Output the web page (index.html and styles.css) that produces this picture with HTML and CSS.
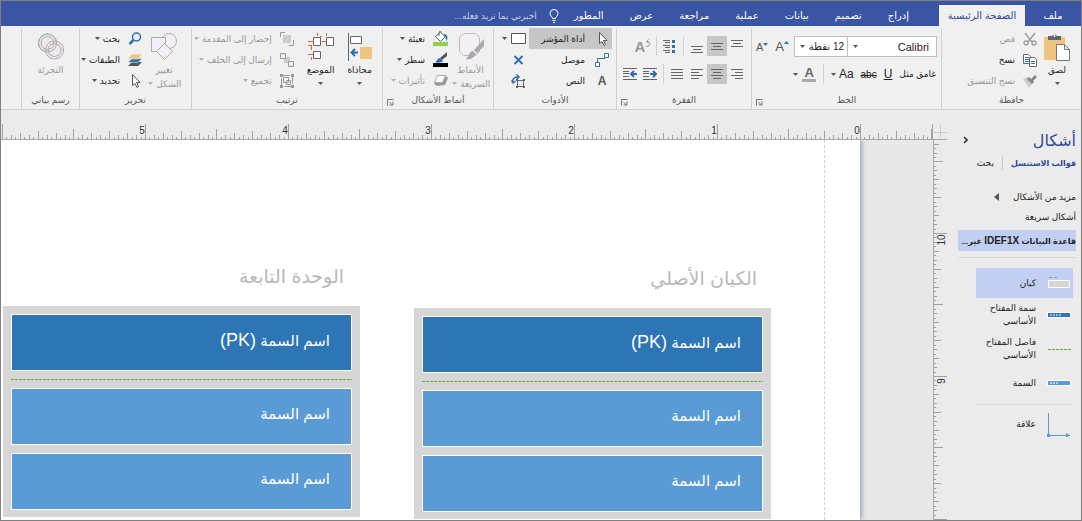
FILE: index.html
```html
<!DOCTYPE html>
<html lang="ar" dir="rtl">
<head>
<meta charset="utf-8">
<title>الصفحة الرئيسية</title>
<link rel="stylesheet" href="styles.css">
</head>
<body>
<svg class="defs" aria-hidden="true">
  <defs>
    <symbol id="arrow" viewBox="0 0 5 3"><path d="M0 0h5L2.500 3z" fill="currentColor"/></symbol>
    <symbol id="launcher" viewBox="0 0 7 7"><path d="M.5 6.500V.5h6M2.500 3l3 3M6 2.500V6H2.500" fill="none" stroke="currentColor"/></symbol>
    <pattern id="ticks-h" x="0" y="0" width="143" height="30" patternUnits="userSpaceOnUse">
      <path stroke="#a0a0a0" d="M.5 14v15M4.500 27v2M9.500 25v4M13.500 27v2M18.500 23v6M22.500 27v2M27.500 25v4M31.500 27v2M36.500 21v8M40.500 27v2M45.500 25v4M49.500 27v2M54.500 23v6M58.500 27v2M63.500 25v4M67.500 27v2M71.500 19v10M76.500 27v2M80.500 25v4M85.500 27v2M89.500 23v6M94.500 27v2M98.500 25v4M103.500 27v2M107.500 21v8M112.500 27v2M116.500 25v4M121.500 27v2M125.500 23v6M130.500 27v2M134.500 25v4M139.500 27v2"/>
    </pattern>
    <pattern id="ticks-v" x="0" y="93" width="15" height="143" patternUnits="userSpaceOnUse">
      <path stroke="#a0a0a0" d="M1 .5h14M1 4.500h2M1 9.500h3M1 13.500h2M1 18.500h5M1 22.500h2M1 27.500h3M1 31.500h2M1 36.500h7M1 40.500h2M1 45.500h3M1 49.500h2M1 54.500h5M1 58.500h2M1 63.500h3M1 67.500h2M1 71.500h9M1 76.500h2M1 80.500h3M1 85.500h2M1 89.500h5M1 94.500h2M1 98.500h3M1 103.500h2M1 107.500h7M1 112.500h2M1 116.500h3M1 121.500h2M1 125.500h5M1 130.500h2M1 134.500h3M1 139.500h2"/>
    </pattern>
  </defs>
</svg>

<div class="window">
  <nav class="tabs">
    <button class="tab tab-file">ملف</button>
    <button class="tab tab-active">الصفحة الرئيسية</button>
    <button class="tab">إدراج</button>
    <button class="tab">تصميم</button>
    <button class="tab">بيانات</button>
    <button class="tab">عملية</button>
    <button class="tab">مراجعة</button>
    <button class="tab">عرض</button>
    <button class="tab">المطور</button>
    <label class="tell">
      <svg width="10" height="14" viewBox="0 0 10 14" fill="none" stroke="#fff"><path d="M3.500 9.500C3.500 7.500 1 7 1 4.500a4 4 0 0 1 8 0C9 7 6.500 7.500 6.500 9.500zM3.500 11.500h3M4 13.500h2"/></svg>
      <input type="text" placeholder="أخبرني بما تريد فعله..." aria-label="أخبرني بما تريد فعله">
    </label>
  </nav>

  <header class="ribbon">
    <section class="group clipboard">
      <div class="body">
        <button class="big">
          <svg width="26" height="28" viewBox="0 0 26 28"><path fill="#edc57c" d="M0 4h21v23H0z"/><path fill="#666" d="M4 7V3h4a3 3 0 0 1 5 0h4v4z"/><circle cx="10.500" cy="3" r="1" fill="#fff"/><path fill="#fff" stroke="#777" d="M12.500 11.500h8l5 5v11h-13zM20.500 11.500v5h5"/></svg>
          <span>لصق</span>
          <svg class="arrow"><use href="#arrow"/></svg>
        </button>
        <div class="stack">
          <button class="item off"><svg width="14" height="14" viewBox="0 0 14 14" fill="none" stroke="#999" stroke-width="1.300"><path d="M2 1l7 9M12 1L5 10"/><circle cx="3" cy="11" r="2"/><circle cx="11" cy="11" r="2"/></svg><span>قص</span></button>
          <button class="item"><svg width="14" height="14" viewBox="0 0 14 14" fill="#fff" stroke="#667"><path d="M.5 1.500h5l2 2v7h-7z"/><path d="M6.500 4.500h5l2 2v7h-7z"/><path stroke="#2e6fb5" d="M2 4.500h4M2 6.500h4M2 8.500h4M8 8.500h4M8 10.500h4"/></svg><span>نسخ</span></button>
          <button class="item off"><svg width="14" height="14" viewBox="0 0 14 14"><path fill="#ccc" d="M0 5l5-2 5 6-4 5z"/><path stroke="#888" stroke-width="3" d="M5 4l5 5M9 6l4-4"/></svg><span>نسخ التنسيق</span></button>
        </div>
      </div>
      <h2>حافظة</h2>
    </section>

    <section class="group font">
      <div class="body rows">
        <div class="line">
          <span class="combo combo-font"><select aria-label="الخط"><option>Calibri</option></select><svg class="arrow"><use href="#arrow"/></svg></span>
          <span class="combo combo-size"><select aria-label="حجم الخط"><option>12 نقطة</option></select><svg class="arrow"><use href="#arrow"/></svg></span>
          <button class="glyph grow" aria-label="تكبير الخط"><span>A</span><svg width="5" height="3" viewBox="0 0 5 3"><path fill="#2e6fb5" d="M0 3h5L2.500 0z"/></svg></button>
          <button class="glyph grow shrink" aria-label="تصغير الخط"><span>A</span><svg width="5" height="3" viewBox="0 0 5 3"><path fill="#2e6fb5" d="M0 0h5L2.500 3z"/></svg></button>
        </div>
        <div class="line style-line">
          <button class="glyph">غامق مثل</button>
          <button class="glyph under">U</button>
          <button class="glyph strike">abc</button>
          <button class="glyph case">Aa<svg class="arrow"><use href="#arrow"/></svg></button>
          <i class="sep"></i>
          <button class="glyph color"><span>A</span><svg class="arrow"><use href="#arrow"/></svg></button>
        </div>
      </div>
      <h2>الخط</h2>
      <button class="launch" aria-label="إعدادات الخط"><svg width="7" height="7"><use href="#launcher"/></svg></button>
    </section>

    <section class="group para">
      <div class="body rows">
        <div class="line">
          <button class="cell" aria-label="محاذاة لأعلى"><svg width="14" height="14" viewBox="0 0 14 14" stroke="#666"><path d="M1 1.500h12M3 4.500h8M1 7.500h12"/></svg></button>
          <button class="cell on" aria-label="محاذاة للوسط"><svg width="14" height="14" viewBox="0 0 14 14" stroke="#666"><path d="M1 4.500h12M3 7.500h8M1 10.500h12"/></svg></button>
          <button class="cell" aria-label="محاذاة لأسفل"><svg width="14" height="14" viewBox="0 0 14 14" stroke="#666"><path d="M1 7.500h12M3 10.500h8M1 13.500h12"/></svg></button>
          <i class="sep"></i>
          <button class="cell" aria-label="تعداد نقطي"><svg width="14" height="14" viewBox="0 0 14 14" stroke="#666"><path d="M0 1.500h7M2 3.500h5M0 6.500h7M2 8.500h5M0 11.500h7M2 13.500h5"/><path stroke="#2e6fb5" stroke-width="3" d="M9 2.500h3M9 7.500h3M9 12.500h3"/></svg></button>
          <i class="sep"></i>
          <button class="cell turn" aria-label="تدوير النص"><span>A</span><svg width="6" height="8" viewBox="0 0 6 8" fill="none" stroke="#999"><path d="M1 7.500c5 0 5-5 1-5M3.500.5l-2 2 2 2"/></svg></button>
        </div>
        <div class="line">
          <button class="cell" aria-label="محاذاة لليمين"><svg width="14" height="14" viewBox="0 0 14 14" stroke="#666"><path d="M1 2.500h12M5 5.500h8M1 8.500h12M5 11.500h8"/></svg></button>
          <button class="cell on" aria-label="توسيط"><svg width="14" height="14" viewBox="0 0 14 14" stroke="#666"><path d="M1 2.500h12M3 5.500h8M1 8.500h12M3 11.500h8"/></svg></button>
          <button class="cell" aria-label="محاذاة لليسار"><svg width="14" height="14" viewBox="0 0 14 14" stroke="#666"><path d="M1 2.500h12M1 5.500h8M1 8.500h12M1 11.500h8"/></svg></button>
          <button class="cell" aria-label="ضبط"><svg width="14" height="14" viewBox="0 0 14 14" stroke="#666"><path d="M1 2.500h12M1 5.500h12M1 8.500h12M1 11.500h12"/></svg></button>
          <i class="sep"></i>
          <button class="cell" aria-label="إنقاص المسافة"><svg width="14" height="14" viewBox="0 0 14 14" stroke="#666"><path d="M0 1.500h14M0 4.500h6M0 6.500h6M0 9.500h6M0 12.500h14"/><path stroke="#2e6fb5" stroke-width="2" fill="none" d="M7 7h5M10 4l3 3-3 3"/></svg></button>
          <button class="cell" aria-label="زيادة المسافة"><svg width="14" height="14" viewBox="0 0 14 14" stroke="#666"><path d="M0 1.500h14M0 4.500h6M0 6.500h6M0 9.500h6M0 12.500h14"/><path stroke="#2e6fb5" stroke-width="2" fill="none" d="M9 7h5M11 4L8 7l3 3"/></svg></button>
        </div>
      </div>
      <h2>الفقرة</h2>
      <button class="launch" aria-label="إعدادات الفقرة"><svg width="7" height="7"><use href="#launcher"/></svg></button>
    </section>

    <section class="group tools">
      <div class="body">
        <div class="stack wide">
          <button class="item on"><svg width="14" height="14" viewBox="0 0 14 14"><path fill="#fff" stroke="#555" d="M4.500.5v11l2.500-2 2 4 1.500-1-2-4H12z"/></svg><span>أداة المؤشر</span></button>
          <button class="item"><svg width="14" height="14" viewBox="0 0 14 14" fill="none"><path stroke="#666" d="M2.500 9V5.500H10"/><path fill="#fff" stroke="#2e6fb5" d="M.5 9.500h4v4h-4zM9.500.5h4v4h-4z"/></svg><span>موصل</span></button>
          <button class="item"><span class="letter">A</span><span>النص</span></button>
        </div>
        <div class="stack">
          <button class="item" aria-label="مستطيل"><svg width="15" height="11" viewBox="0 0 15 11"><path fill="#fff" stroke="#555" d="M.5.5h14v10H.5z"/></svg><svg class="arrow"><use href="#arrow"/></svg></button>
          <button class="item" aria-label="نقطة اتصال"><svg width="15" height="10" viewBox="0 0 15 10"><path stroke="#2e6fb5" stroke-width="2" d="M3.500 1l8 8M11.500 1l-8 8"/></svg></button>
          <button class="item" aria-label="كتلة النص"><svg width="15" height="14" viewBox="0 0 15 14" fill="none"><path stroke="#2e6fb5" stroke-width="1.500" d="M2 9C1 5 3 3 7 3M5.500.5L8 3 5.500 5.500M.5 6.500L2 9l2.500-2"/><path stroke="#666" d="M6.500 6.500h6v6h-6z"/><path fill="#666" d="M5 5h2v2H5zM12 5h2v2h-2zM5 12h2v2H5zM12 12h2v2h-2z"/></svg></button>
        </div>
      </div>
      <h2>الأدوات</h2>
    </section>

    <section class="group styles">
      <div class="body">
        <button class="big off">
          <svg width="28" height="28" viewBox="0 0 28 28"><path fill="#f4eff6" stroke="#bbb" d="M6.500.5h12l4 4v14l-4 4h-12l-4-4v-14z"/><path fill="#aaa" d="M27 6v7l-7 7-3-3zM16 18l3 3c-2 4-5 6-11 5 4-1 3-7 8-8z"/></svg>
          <span>الأنماط<br>السريعة <svg class="arrow"><use href="#arrow"/></svg></span>
        </button>
        <div class="stack">
          <button class="item"><svg width="15" height="15" viewBox="0 0 15 15"><path fill="#8fd14f" d="M0 11h15v4H0z"/><path fill="#fff" stroke="#666" d="M7.500 1.500l5 4-5 5-5-5zM6 5V1a1.500 1.500 0 0 1 2.500 0"/><path fill="#2e6fb5" d="M11 3c3 0 4 3 3 7-1-2-1-4-3-5z"/></svg><span>تعبئة</span><svg class="arrow"><use href="#arrow"/></svg></button>
          <button class="item"><svg width="15" height="15" viewBox="0 0 15 15"><path d="M0 11h15v4H0z"/><path fill="#555" d="M14 0v4L9 8 7 6z"/><path fill="#2e6fb5" d="M7 6l3 3c-2 2-5 2-8 1 3-1 2-4 5-4z"/></svg><span>سطر</span><svg class="arrow"><use href="#arrow"/></svg></button>
          <button class="item off"><svg width="15" height="13" viewBox="0 0 15 13"><path fill="#999" d="M5 4l8-2 2 2-3 7-8 1-3-2z"/><path fill="#fff" stroke="#aaa" d="M4.500 1.500h8l-3 7h-8z"/></svg><span>تأثيرات</span><svg class="arrow"><use href="#arrow"/></svg></button>
        </div>
      </div>
      <h2>أنماط الأشكال</h2>
      <button class="launch off" aria-label="إعدادات الأنماط"><svg width="7" height="7"><use href="#launcher"/></svg></button>
    </section>

    <section class="group arrange">
      <div class="body">
        <button class="big">
          <svg width="24" height="28" viewBox="0 0 24 28"><path stroke="#666" d="M.5 0v28"/><path fill="#fff" stroke="#666" d="M2.500 3.500h11v7h-11z"/><path fill="#edc57c" d="M12 14h12v12H12z"/><path fill="none" stroke="#2e6fb5" stroke-width="2" d="M4 19.500h6M7 16l-3.500 3.500L7 23"/></svg>
          <span>محاذاة</span>
          <svg class="arrow"><use href="#arrow"/></svg>
        </button>
        <button class="big">
          <svg width="26" height="28" viewBox="0 0 26 28"><path fill="none" stroke="#e0603f" d="M9.500 0v3M18.500 0v3M12 3.500h2M14 8.500h4M0 8.500h5M3.500 12v5M0 12.500h3M0 21.500h5M3.500 24v3"/><path fill="#fff" stroke="#666" d="M5.500 4.500h7v8h-7zM18.500 4.500h7v8h-7zM5.500 18.500h7v7h-7z"/></svg>
          <span>الموضع</span>
          <svg class="arrow"><use href="#arrow"/></svg>
        </button>
        <div class="stack">
          <button class="item off"><svg width="14" height="14" viewBox="0 0 14 14" fill="none" stroke="#999"><path fill="#ccc" stroke="none" d="M3 3h8v8H3z"/><path d="M.5 5V.5H5M9 13.500h4.500V8"/></svg><span>إحضار إلى المقدمة</span><svg class="arrow"><use href="#arrow"/></svg></button>
          <button class="item off"><svg width="14" height="14" viewBox="0 0 14 14" fill="none" stroke="#999"><path fill="#ccc" stroke="none" d="M4 4h6v6H4z"/><path fill="#f0f0f0" d="M.5.5h5v5h-5zM8.500 8.500h5v5h-5z"/></svg><span>إرسال إلى الخلف</span><svg class="arrow"><use href="#arrow"/></svg></button>
          <button class="item off"><svg width="14" height="14" viewBox="0 0 14 14" fill="none" stroke="#999"><path d="M1.500 1.500h11v11h-11z" stroke-dasharray="8 3"/><path d="M3.500 3.500h5v5h-5zM6.500 6.500h4v4h-4z"/><path fill="#999" stroke="none" d="M0 0h3v3H0zM11 0h3v3h-3zM0 11h3v3H0zM11 11h3v3h-3z"/></svg><span>تجميع</span><svg class="arrow"><use href="#arrow"/></svg></button>
        </div>
      </div>
      <h2>ترتيب</h2>
    </section>

    <section class="group editing">
      <div class="body">
        <button class="big off">
          <svg width="26" height="28" viewBox="0 0 26 28" fill="#f4eff6" stroke="#aaa"><circle cx="18" cy="8" r="7.500"/><path d="M.5 4.500h14v14H.5z"/><path d="M13.500 10.500l8 8-8 8-8-8z"/></svg>
          <span>تغيير<br>الشكل <svg class="arrow"><use href="#arrow"/></svg></span>
        </button>
        <div class="stack">
          <button class="item"><svg width="14" height="14" viewBox="0 0 14 14" fill="none" stroke="#2e6fb5"><circle cx="8.500" cy="5" r="4" stroke-width="1.500"/><path stroke-width="2.500" d="M5.500 8L1.500 12"/></svg><span>بحث</span><svg class="arrow"><use href="#arrow"/></svg></button>
          <button class="item"><svg width="14" height="14" viewBox="0 0 14 14"><path fill="#555" d="M4 9h10l-4 4H0z"/><path fill="#2e6fb5" stroke="#f0f0f0" stroke-width=".5" d="M4 5.500h10l-4 4H0z"/><path fill="#edc57c" stroke="#f0f0f0" stroke-width=".5" d="M4 1h10l-4 5H0z"/></svg><span>الطبقات</span><svg class="arrow"><use href="#arrow"/></svg></button>
          <button class="item"><svg width="14" height="14" viewBox="0 0 14 14"><path fill="#fff" stroke="#555" d="M4.500.5v11l2.500-2 2 4 1.500-1-2-4H12z"/></svg><span>تحديد</span><svg class="arrow"><use href="#arrow"/></svg></button>
        </div>
      </div>
      <h2>تحرير</h2>
    </section>

    <section class="group diagram">
      <div class="body">
        <button class="big off">
          <svg width="26" height="28" viewBox="0 0 26 28" fill="none" stroke="#aaa"><circle cx="9.500" cy="10" r="9" fill="#eee8ee"/><circle cx="16.500" cy="17" r="9" fill="#eee8ee"/><circle cx="9.500" cy="10" r="9"/><circle cx="9.500" cy="10" r="6.500"/><circle cx="16.500" cy="17" r="6.500"/></svg>
          <span>التجزئة</span>
        </button>
      </div>
      <h2>رسم بياني</h2>
    </section>
  </header>

  <main class="main">
    <aside class="panel">
      <div class="panel-head">
        <h1>أشكال</h1>
        <button class="collapse" aria-label="طي"><svg width="5" height="8" viewBox="0 0 5 8" fill="none" stroke="#333" stroke-width="1.600"><path d="M1 1l3 3-3 3"/></svg></button>
      </div>
      <div class="panel-tabs">
        <button class="ptab active">قوالب الاستنسل</button>
        <button class="ptab">بحث</button>
      </div>
      <button class="link more"><span>مزيد من الأشكال</span><svg width="5" height="8" viewBox="0 0 5 8"><path fill="#555" d="M5 0v8L0 4z"/></svg></button>
      <button class="link">أشكال سريعة</button>
      <button class="link stencil"><span>قاعدة البيانات <b>IDEF1X</b> غير...</span></button>
      <div class="shapes">
        <button class="shape selected"><svg width="24" height="12" viewBox="0 0 24 12"><path stroke="#7c9ad6" stroke-dasharray="3 2" d="M2 .5h10"/><path fill="#d6d6d6" stroke="#fff" d="M1.500 3.500h21v7h-21z"/></svg><span>كيان</span></button>
        <button class="shape"><svg width="24" height="8" viewBox="0 0 24 8"><path fill="#fff" d="M0 1h24v6H0z"/><path fill="#2e75b6" d="M1 2h22v4H1z"/><path stroke="#fff" stroke-dasharray="2 1" d="M3 4h11"/></svg><span>سمة المفتاح<br>الأساسي</span></button>
        <button class="shape"><svg width="24" height="8" viewBox="0 0 24 8"><path stroke="#6aa83c" stroke-dasharray="3 1" d="M1 4.500h23"/></svg><span>فاصل المفتاح<br>الأساسي</span></button>
        <button class="shape short"><svg width="24" height="8" viewBox="0 0 24 8"><path fill="#fff" d="M0 1h24v6H0z"/><path fill="#5b9bd5" d="M1 2h22v4H1z"/><path stroke="#fff" stroke-dasharray="2 1" d="M3 4h9"/></svg><span>السمة</span></button>
        <button class="shape last"><svg width="24" height="24" viewBox="0 0 24 24" fill="none" stroke="#5b9bd5"><path d="M1.500 0v22.500H23"/><path fill="#5b9bd5" stroke="none" d="M19 20l4 2.500-4 2zM0 21h3v3H0z"/></svg><span>علاقة</span></button>
      </div>
    </aside>

    <div class="work">
      <div class="ruler-h">
        <svg class="ruler-svg" aria-hidden="true">
          <svg x="100%" overflow="visible">
            <g transform="translate(-87 0)"><rect x="-3000" width="3073" height="30" fill="url(#ticks-h)"/></g>
            <path stroke="#a8a8a8" d="M-3000 29.500H0M-14.500 14v16"/>
            <path stroke="#ccc" d="M-13 22.500H0M-6.500 15v12"/>
            <g class="num"><text x="-90" y="24">0</text><text x="-233" y="24">1</text><text x="-376" y="24">2</text><text x="-519" y="24">3</text><text x="-662" y="24">4</text><text x="-805" y="24">5</text></g>
          </svg>
        </svg>
      </div>
      <div class="ruler-v">
        <svg class="ruler-svg" aria-hidden="true">
          <rect width="15" height="100%" fill="url(#ticks-v)"/>
          <path stroke="#a8a8a8" d="M.5 0v3000"/>
          <g class="num"><text transform="translate(12 100) rotate(-90)">10</text><text transform="translate(12 241) rotate(-90)">9</text></g>
        </svg>
      </div>
      <div class="canvas">
        <div class="page">
          <article class="entity parent">
            <h3>الكيان الأصلي</h3>
            <div class="frame">
              <p class="key">اسم السمة <span>(PK)</span></p>
              <hr>
              <p>اسم السمة</p>
              <p>اسم السمة</p>
            </div>
          </article>
          <article class="entity child">
            <h3>الوحدة التابعة</h3>
            <div class="frame">
              <p class="key">اسم السمة <span>(PK)</span></p>
              <hr>
              <p>اسم السمة</p>
              <p>اسم السمة</p>
            </div>
          </article>
        </div>
      </div>
    </div>
  </main>
</div>
</body>
</html>
```
FILE: styles.css
```css
* { box-sizing: border-box; }
html, body { height: 100%; }
body {
  margin: 0;
  font-family: "Liberation Sans", "DejaVu Sans", sans-serif;
  font-size: 9px;
  color: #222;
  background: #ebebeb;
}
h1, h2, h3, p { margin: 0; font-weight: normal; }
button, input, select { font: inherit; color: inherit; }
button { border: 0; padding: 0; background: none; white-space: nowrap; }
svg { display: block; flex: none; }
.defs { position: absolute; width: 0; height: 0; }
.arrow { width: 5px; height: 3px; color: #555; }

.window {
  display: flex;
  flex-direction: column;
  height: 100vh;
  border: 1px solid #808080;
  overflow: hidden;
}

/* Tabs */
.tabs { display: flex; flex: none; height: 25px; padding-top: 4px; background: #3955a3; color: #fff; font-size: 10px; }
.tab { padding: 0 13px; }
.tab-file { width: 56px; }
.tab-active { width: 86px; padding: 0; background: #f0f0f0; color: #2b4a9b; }
.tab-active + .tab { margin-right: 17px; }
.tell { display: flex; align-items: center; gap: 12px; padding-right: 2px; font-size: 9px; }
.tell input { width: 120px; padding: 0; border: 0; background: none; }
.tell input::placeholder { color: #c5cfe8; opacity: 1; }

/* Ribbon */
.ribbon {
  display: grid;
  flex: none;
  grid-template-columns: 140fr 190fr 135fr 123fr 111fr 191fr 112fr 58fr 20fr;
  padding: 2px 0 0;
  background: #f0f0f0;
  border-bottom: 1px solid #d2d2d2;
}
.group { position: relative; min-width: 0; border-left: 1px solid #d0d0d0; }
.group h2 { height: 18px; font-size: 9px; line-height: 19px; text-align: center; color: #555; }
.body { display: flex; align-items: flex-start; height: 63px; }
.rows { flex-direction: column; }
.big {
  display: flex;
  flex-direction: column;
  align-items: center;
  gap: 2px;
  padding-top: 5px;
  line-height: 14px;
}
.big .arrow { margin-top: 3px; }
.big span .arrow { display: inline-block; margin: 0 1px 2px; }
.stack { display: flex; flex-direction: column; }
.item { display: flex; align-items: center; gap: 8px; height: 21px; }
.item .arrow { margin-right: -5px; }
.off { color: #999; }
.off .arrow { color: #b0b0b0; }
.on { background: #c6c6c6; }
.letter { width: 14px; font-size: 12px; font-weight: bold; color: #555; text-align: center; }
.launch { position: absolute; left: 4px; bottom: 3px; color: #777; }
.sep { width: 1px; height: 20px; background: #d0d0d0; }

.clipboard .body { padding-right: 11px; gap: 7px; }

.line { display: flex; align-items: center; }
.font .body { padding: 8px 4px 0 0; gap: 7px; }
.combo { position: relative; display: flex; height: 21px; border: 1px solid #c0c0c0; background: #fff; font-size: 11px; }
.combo + .combo { margin-right: -1px; }
.combo-font { width: 90px; }
.combo-size { width: 54px; font-size: 10px; }
.combo select { width: 100%; padding: 0 7px 0 0; border: 0; background: none; appearance: none; }
.combo-size select { padding: 0 3px 0 0; }
.combo .arrow { position: absolute; left: 5px; top: 8px; }
.grow { display: flex; direction: ltr; margin-right: 5px; font-size: 13px; color: #555; }
.grow svg { margin-top: 2px; }
.shrink { font-size: 11px; margin-right: 7px; }
.style-line { gap: 7px; height: 20px; padding-right: 1px; }
.under { font-size: 12px; text-decoration: underline; }
.strike { font-size: 10px; text-decoration: line-through; }
.case { display: flex; align-items: center; gap: 3px; font-size: 12px; }
.color { display: flex; align-items: center; gap: 4px; font-size: 13px; font-weight: bold; color: #666; }
.color span { padding: 0 2px; line-height: 13px; border-bottom: 3px solid #aaa; }

.para .body { padding: 8px 4px 0 0; gap: 8px; }
.cell { display: flex; align-items: center; justify-content: center; width: 20px; height: 20px; }
.para .sep { margin: 0 3px; }
.turn { direction: ltr; color: #999; font-size: 15px; font-weight: bold; }
.turn svg { margin-bottom: 6px; }

.tools .body { padding-right: 4px; gap: 3px; }
.tools .wide { width: 83px; }
.tools .wide .item { padding-right: 3px; gap: 10px; }
.tools .stack + .stack .arrow { margin-right: -4px; }

.styles .body { padding-right: 4px; gap: 4px; }
.styles .big { width: 37px; }
.arrange .body { padding-right: 10px; gap: 13px; }
.editing .body { padding-right: 9px; gap: 4px; }
.editing .big { width: 36px; }
.diagram .body { justify-content: center; }

/* Main area */
.main { display: flex; flex: 1; min-height: 0; }
.panel { flex: none; width: 134px; padding: 18px 5px 0 0; background: #ebebeb; }
.panel-head { display: flex; justify-content: space-between; align-items: center; height: 24px; padding-left: 16px; }
.panel-head h1 { font-size: 16px; color: #2b4a9b; }
.panel-tabs { display: flex; height: 14px; margin: 4px 0 17px; }
.ptab { padding: 0 8px; }
.ptab.active { padding-right: 0; border-left: 1px solid #c8c8c8; font-weight: bold; color: #2b4a9b; font-size: 8px; }
.link { display: flex; align-items: center; width: 118px; height: 20px; gap: 14px; }
.stencil { height: 21px; margin-top: 3px; background: #c2cef2; font-size: 8px; font-weight: bold; }
.stencil b { font-size: 10px; }
.shapes { width: 118px; margin-top: 6px; padding: 10px 3px 0 18px; border-top: 1px solid #d8d8d8; }
.shape { display: flex; align-items: center; gap: 11px; width: 100%; height: 34px; padding-right: 2px; line-height: 13px; text-align: right; white-space: normal; }
.shape.selected { height: 30px; background: #c2cef2; }
.shape.last { height: 40px; margin-top: 4px; border-top: 1px solid #dcdcdc; }

.work { display: grid; flex: 1; min-width: 0; grid-template-columns: 14px 1fr; grid-template-rows: 30px 1fr; }
.ruler-h { grid-column: 1 / 3; }
.ruler-svg { width: 100%; height: 100%; direction: ltr; }
.ruler-h, .ruler-v { overflow: hidden; }
.num { font-size: 10px; fill: #333; text-anchor: middle; }
.canvas { position: relative; overflow: hidden; padding-right: 73px; background: #e8e8e8; }
.page {
  position: relative;
  height: 100%;
  background: #fff;
  box-shadow: 1px 0 6px #8090a0;
}
.page::before { content: ""; position: absolute; top: 0; bottom: 0; right: 35px; border-left: 1px dashed #d0d0d0; }

.entity { position: absolute; width: 357px; }
.parent { top: 122px; right: 89px; }
.child { top: 120px; right: 500px; }
.entity h3 { height: 46px; padding-right: 14px; font-size: 19px; line-height: 34px; color: #b8b8b8; }
.child h3 { padding-right: 16px; }
.frame { display: flex; flex-direction: column; gap: 8px; padding: 8px 8px 7px; background: #d6d6d6; }
.frame p { height: 57px; padding-right: 21px; border: 1px solid #fff; background: #5b9bd5; color: #fff; font-size: 15px; line-height: 50px; }
.frame .key { background: #2e75b6; }
.frame .key span { font-size: 18px; }
.frame hr { width: 100%; height: 1px; margin: 0; border: 0; background: repeating-linear-gradient(90deg, #6aa83c 0 3px, #d6d6d6 3px 4px); }
```
